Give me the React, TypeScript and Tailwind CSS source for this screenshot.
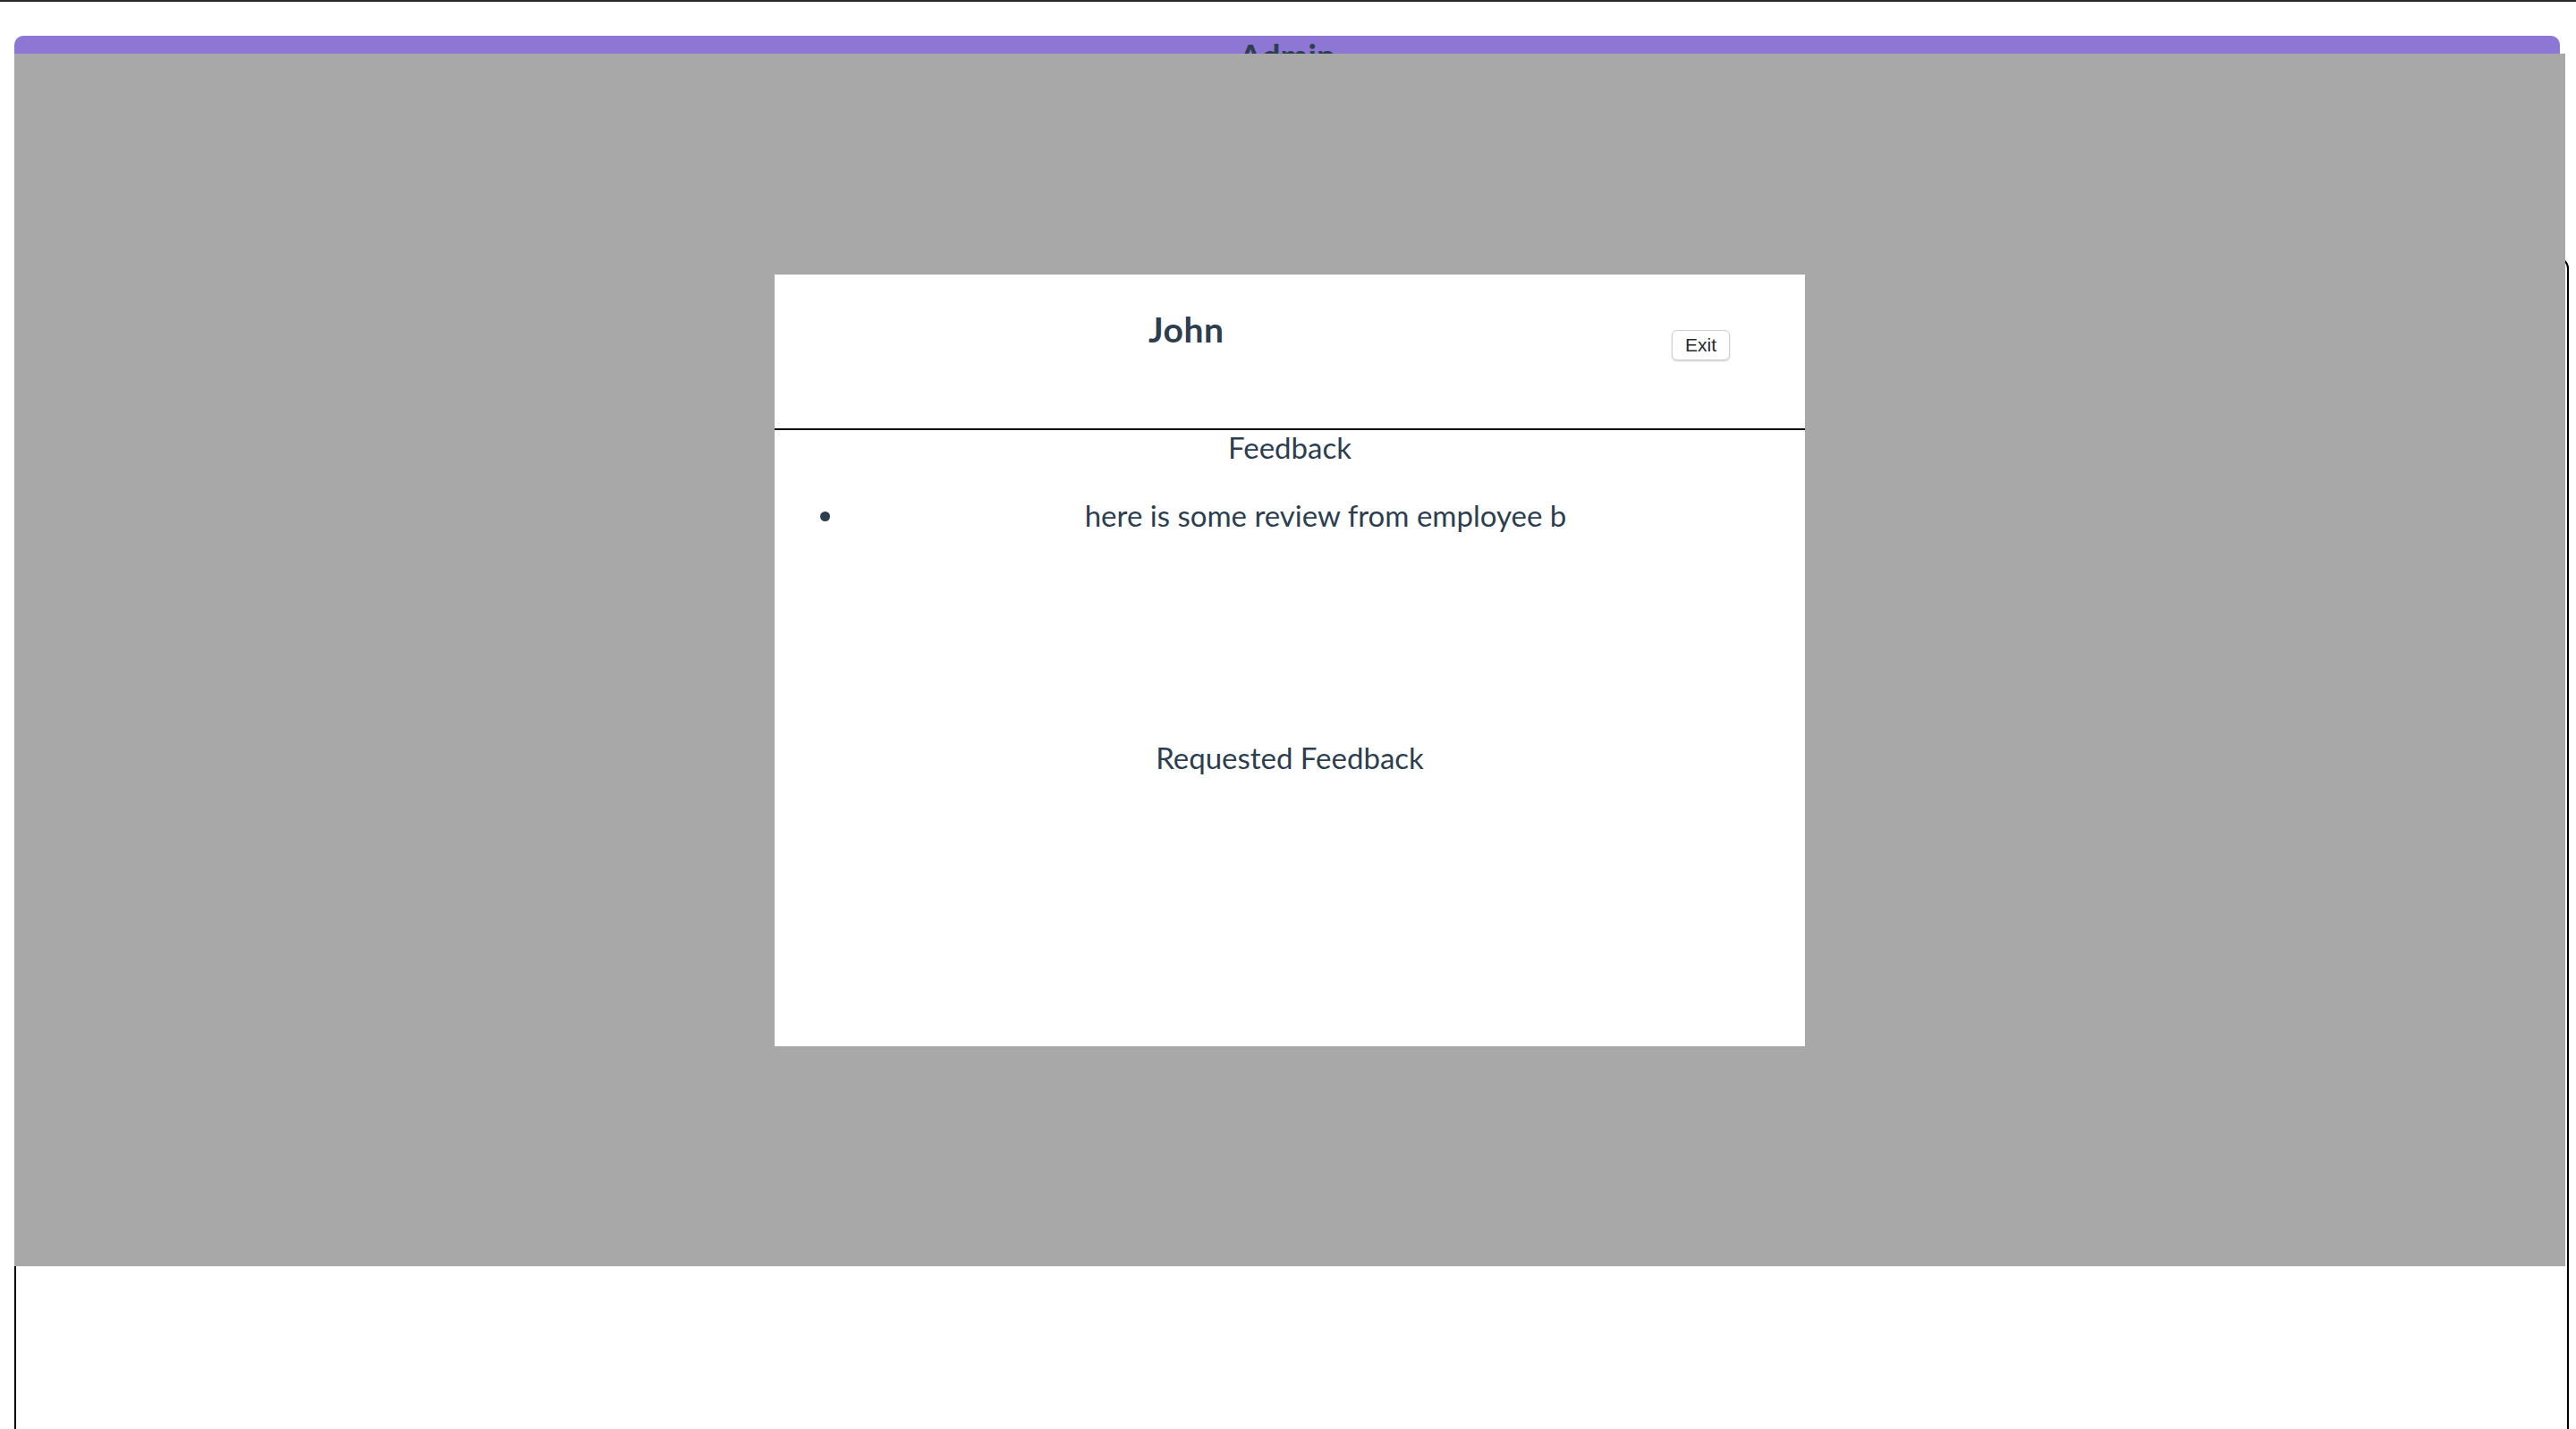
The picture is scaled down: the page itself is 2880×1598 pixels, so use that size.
import React from 'react';

const reviews = ['here is some review from employee b'];

export default function App() {
    return (
        <div className="relative h-[1598px] w-full overflow-hidden bg-white font-['Lato',sans-serif] text-[#2c3e50]">
            {/* top edge */}
            <div className="h-[2px] bg-[#2b2b2b]" />

            {/* page behind the modal */}
            <div className="pl-[16px] pr-[8px] pt-[38px]">
                <div className="mr-[10px] h-[60px] rounded-t-[10px] bg-[#8d76d4] text-center">
                    <h3 className="text-[37px] font-bold leading-[1.2]">Admin</h3>
                </div>
                <div className="mt-[188px] h-[1400px] rounded-[12px] border-2 border-black" />
            </div>

            {/* overlay */}
            <div className="absolute left-[16px] top-[60px] flex h-[1356px] w-[2852px] items-center justify-center bg-[#a8a8a8]">
                <div className="flex h-[863px] w-[1152px] flex-col bg-white">
                    {/* modal header */}
                    <div className="flex h-[172px] items-start">
                        <h3 className="ml-[418px] mt-[38px] text-[39px] font-bold leading-[1.2] tracking-[0.5px]">John</h3>
                        <button className="ml-auto mr-[84px] mt-[62px] h-[34px] w-[65px] rounded-[6px] border border-[#cfcfcf] bg-white font-['Liberation_Sans',sans-serif] text-[21px] leading-none text-[#2a2a2a] shadow-[0_1px_2px_rgba(0,0,0,0.2)]">
                            Exit
                        </button>
                    </div>
                    <div className="h-[2px] bg-black" />

                    <div className="text-center text-[33px] leading-[1.2]">Feedback</div>
                    <ul className="mt-[37px] list-disc pl-[80px] text-[33px] leading-[1.2]">
                        {reviews.map((r) => (
                            <li key={r} className="text-center">
                                {r}
                            </li>
                        ))}
                    </ul>

                    <div className="mt-[231px] text-center text-[33px] leading-[1.2]">Requested Feedback</div>
                </div>
            </div>
        </div>
    );
}
